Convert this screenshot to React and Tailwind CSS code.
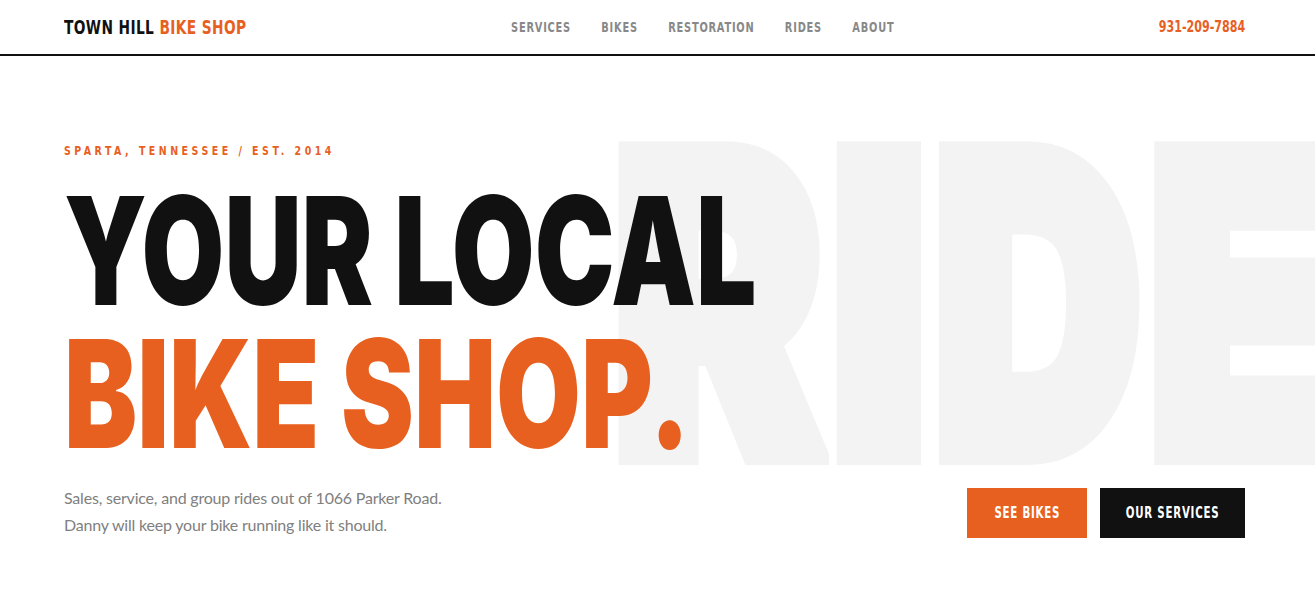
const cond = "font-['DejaVu_Sans_Condensed','DejaVu_Sans',sans-serif] [font-stretch:condensed]";
const bg = "inline-block origin-left font-['Inter',sans-serif] font-black text-[412px] leading-none text-[#f3f3f3] [-webkit-text-stroke:24px_#f3f3f3]";

export default function App() {
  return (
    <div className="min-h-screen bg-white overflow-hidden">
      <header className="h-[56px] border-b-2 border-[#111] flex items-center justify-between pl-16 pr-[70px]">
        <a className="w-[182px] block">
          <span className={`${cond} inline-block whitespace-nowrap origin-left scale-x-[0.765] font-bold text-[20px] tracking-[0.5px] text-[#111]`}>
            TOWN HILL <span className="text-[#e8601f]">BIKE SHOP</span>
          </span>
        </a>
        <nav className={`${cond} flex gap-[39px] origin-center scale-x-[0.78] font-bold text-[14px] tracking-[1px] text-[#888]`}>
          <a>SERVICES</a>
          <a>BIKES</a>
          <a>RESTORATION</a>
          <a>RIDES</a>
          <a>ABOUT</a>
        </nav>
        <a className="w-[86px] flex justify-end">
          <span className={`${cond} inline-block whitespace-nowrap origin-right scale-x-[0.77] font-bold text-[16px] text-[#e8601f]`}>
            931-209-7884
          </span>
        </a>
      </header>

      <section className="relative pl-16 pr-[70px] pt-[86px] pb-16">
        <div aria-hidden className="absolute left-[613px] top-[41px] flex select-none whitespace-nowrap">
          <div className="w-[218px]"><span className={`${bg} scale-x-[0.76]`}>R</span></div>
          <div className="w-[103px]"><span className={`${bg} scale-x-[0.8]`}>I</span></div>
          <div className="w-[215px]"><span className={`${bg} scale-x-[0.695]`}>D</span></div>
          <div className="w-[200px]"><span className={`${bg} scale-x-[0.72]`}>E</span></div>
        </div>
        <div className="relative">
          <p className={`${cond} font-bold text-[12px] tracking-[4px] text-[#e8601f] origin-left scale-x-[0.875] whitespace-nowrap`}>
            SPARTA, TENNESSEE / EST. 2014
          </p>
          <h1 className="mt-[19px] font-['Inter',sans-serif] font-black text-[150px] leading-[143px] whitespace-nowrap">
            <span className="block origin-left scale-x-[0.713] text-[#111]">YOUR LOCAL</span>
            <span className="block origin-left scale-x-[0.73] text-[#e8601f]">BIKE SHOP.</span>
          </h1>
          <div className="mt-[19px] flex items-center justify-between">
            <p className="font-['Lato',sans-serif] text-[16px] tracking-[-0.2px] leading-[27px] text-[#808080]">
              Sales, service, and group rides out of 1066 Parker Road.
              <br />
              Danny will keep your bike running like it should.
            </p>
            <div className="mt-[4px] flex gap-[13px]">
              <a className="w-[120px] h-[50px] flex items-center justify-center bg-[#e8601f]">
                <span className={`${cond} inline-block whitespace-nowrap scale-x-[0.76] text-white font-bold text-[15px] tracking-[1px]`}>
                  SEE BIKES
                </span>
              </a>
              <a className="w-[145px] h-[50px] flex items-center justify-center bg-[#111]">
                <span className={`${cond} inline-block whitespace-nowrap scale-x-[0.76] text-white font-bold text-[15px] tracking-[1px]`}>
                  OUR SERVICES
                </span>
              </a>
            </div>
          </div>
        </div>
      </section>
    </div>
  );
}
